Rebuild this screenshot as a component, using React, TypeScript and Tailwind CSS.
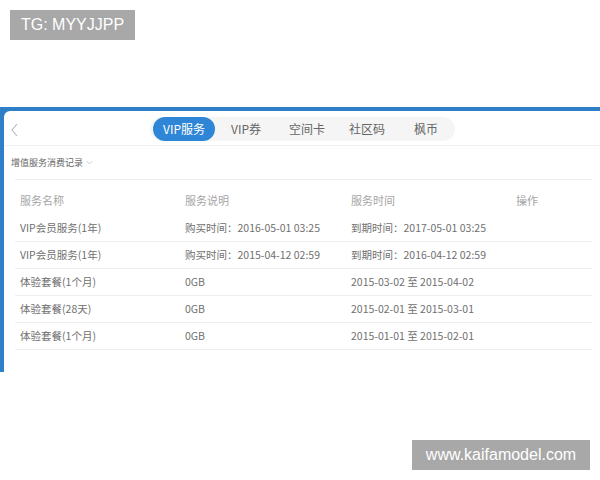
import React from 'react';

const rows = [
    { name: 'VIP会员服务(1年)', desc: '购买时间：2016-05-01 03:25', time: '到期时间：2017-05-01 03:25' },
    { name: 'VIP会员服务(1年)', desc: '购买时间：2015-04-12 02:59', time: '到期时间：2016-04-12 02:59' },
    { name: '体验套餐(1个月)', desc: '0GB', time: '2015-03-02 至 2015-04-02' },
    { name: '体验套餐(28天)', desc: '0GB', time: '2015-02-01 至 2015-03-01' },
    { name: '体验套餐(1个月)', desc: '0GB', time: '2015-01-01 至 2015-02-01' },
];

export default function App() {
    return (
        <div
            className="relative w-[600px] h-[480px] bg-white overflow-hidden"
            style={{ fontFamily: '"Noto Sans CJK SC", "Liberation Sans", sans-serif' }}
        >
            {/* watermarks */}
            <div className="absolute left-[10px] top-[10px] w-[125px] h-[30px] bg-[#a8a8a8] text-white text-[16px] flex items-center justify-center font-['Liberation_Sans']">
                TG: MYYJJPP
            </div>
            <div className="absolute left-[412px] top-[440px] w-[178px] h-[30px] bg-[#a8a8a8] text-white text-[16px] flex items-center justify-center font-['Liberation_Sans']">
                www.kaifamodel.com
            </div>

            <div className="mt-[107px] h-[265px] bg-[#2f7fc8] pl-[4px] pt-[4px] flex">
                <div className="flex-1 bg-white rounded-tl-[6px] flex flex-col">
                    {/* tab header */}
                    <div className="relative h-[35px] border-b border-[#f2f2f2] flex items-center justify-center">
                        <svg className="absolute left-[6px] top-[12px]" width="10" height="14" viewBox="0 0 10 14">
                            <path d="M7 1 L2 7 L7 13" fill="none" stroke="#b5b5b5" strokeWidth="1.1" />
                        </svg>
                        <div className="flex items-center h-[24px] w-[305px] bg-[#f5f5f5] rounded-full pl-[3px] ml-[1px] mt-[2px]">
                            <div className="h-[24px] w-[62px] rounded-full bg-[#2f86d6] text-white text-[12px] flex items-center justify-center">
                                VIP服务
                            </div>
                            <div className="flex text-[12px] text-[#666]">
                                <span className="ml-[16px]">VIP券</span>
                                <span className="ml-[28px]">空间卡</span>
                                <span className="ml-[24px]">社区码</span>
                                <span className="ml-[29px]">枫币</span>
                            </div>
                        </div>
                    </div>

                    {/* sub header */}
                    <div className="h-[33px] flex items-center pl-[7px] text-[9px] text-[#666]">
                        增值服务消费记录
                        <svg className="ml-[3px]" width="7" height="5" viewBox="0 0 7 5">
                            <path d="M0.5 1 L3.5 4 L6.5 1" fill="none" stroke="#c0c0c0" strokeWidth="0.8" />
                        </svg>
                    </div>

                    {/* table */}
                    <div className="ml-[11px] w-[577px] border-t border-[#efefef]">
                        <div className="h-[35px] grid grid-cols-[165px_166px_165px_1fr] items-center pl-[5px] pt-[6px] text-[11px] text-[#a5a5a5]">
                            <span>服务名称</span>
                            <span>服务说明</span>
                            <span>服务时间</span>
                            <span>操作</span>
                        </div>
                        {rows.map((r, i) => (
                            <div
                                key={i}
                                className="h-[27px] grid grid-cols-[165px_166px_165px_1fr] items-center pl-[5px] border-b border-[#efefef] text-[10.5px] text-[#707070]"
                            >
                                <span>{r.name}</span>
                                <span>{r.desc}</span>
                                <span>{r.time}</span>
                                <span></span>
                            </div>
                        ))}
                    </div>
                </div>
            </div>
        </div>
    );
}
